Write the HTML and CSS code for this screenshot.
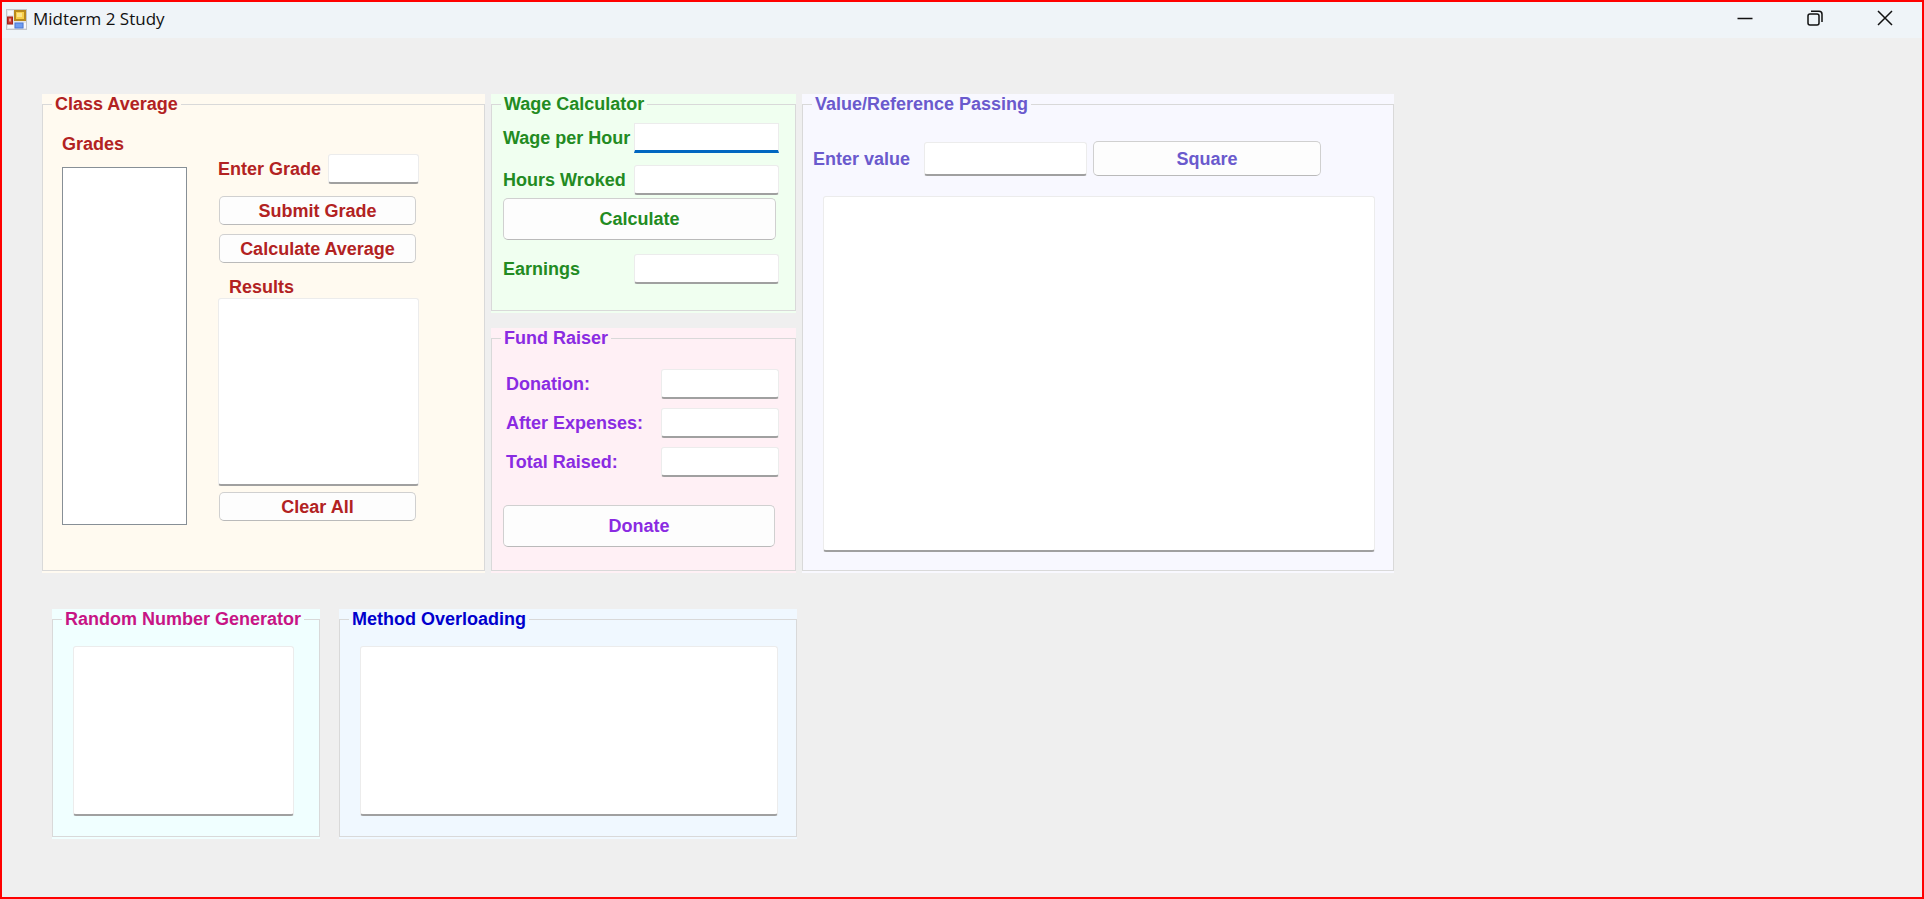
FILE: index.html
```html
<!DOCTYPE html>
<html lang="en">
<head>
<meta charset="utf-8">
<title>Midterm 2 Study</title>
<link rel="stylesheet" href="styles.css">
</head>
<body>
<div class="window">
  <header class="titlebar">
    <svg class="app-icon" viewBox="0 0 21 21" aria-hidden="true">
      <rect x="0.5" y="0.5" width="20" height="20" fill="#e4e6ea" stroke="#c3c5c9"/>
      <rect x="2" y="2" width="5" height="4" fill="#f7f8fa"/>
      <rect x="2" y="16" width="6" height="3" fill="#f7f8fa"/>
      <rect x="9" y="2" width="10" height="9" fill="#f8cf4a" stroke="#b98a1c" stroke-width="2"/>
      <rect x="11" y="4" width="5" height="4" fill="#fde48a"/>
      <rect x="1.500" y="8" width="5" height="7" fill="#c8362c" stroke="#a3241d"/>
      <rect x="3" y="9.500" width="2" height="3" fill="#ee9a92"/>
      <rect x="9" y="14" width="8" height="5" fill="#6f9cf0" stroke="#4a78d6"/>
      <rect x="18" y="14" width="2" height="5" fill="#f7f8fa"/>
    </svg>
    <h1 class="title">Midterm 2 Study</h1>
    <div class="window-controls">
      <button type="button" class="control" aria-label="Minimize">
        <svg viewBox="0 0 16 16"><path d="M0.500 8.500H15.500"/></svg>
      </button>
      <button type="button" class="control" aria-label="Restore">
        <svg viewBox="0 0 16 16"><rect x="1" y="4" width="11" height="11" rx="2"/><path d="M4 1.200H12A3 3 0 0 1 15 4.200V12"/></svg>
      </button>
      <button type="button" class="control" aria-label="Close">
        <svg viewBox="0 0 16 16"><path d="M1 1L15 15M15 1L1 15"/></svg>
      </button>
    </div>
  </header>

  <main class="content">
    <div class="top-row">
      <section class="panel panel-class">
        <fieldset class="group">
          <legend>Class Average</legend>
          <div class="class-body">
            <div class="grades">
              <label for="grades">Grades</label>
              <select id="grades" class="listbox" size="10"></select>
            </div>
            <div class="grade-tools">
              <div class="grade-entry">
                <label for="grade">Enter Grade</label>
                <input id="grade" class="field" type="text">
              </div>
              <button type="button" class="btn">Submit Grade</button>
              <button type="button" class="btn">Calculate Average</button>
              <label class="results-label" for="results">Results</label>
              <textarea id="results" class="field results"></textarea>
              <button type="button" class="btn btn-clear">Clear All</button>
            </div>
          </div>
        </fieldset>
      </section>

      <div class="stack">
        <section class="panel panel-wage">
          <fieldset class="group">
            <legend>Wage Calculator</legend>
            <div class="wage-body">
              <div class="wage-row">
                <label for="wage">Wage per Hour</label>
                <input id="wage" class="field field-active" type="text">
              </div>
              <div class="wage-row wage-row-hours">
                <label for="hours">Hours Wroked</label>
                <input id="hours" class="field" type="text">
              </div>
              <button type="button" class="btn btn-tall">Calculate</button>
              <div class="wage-row wage-row-earnings">
                <label for="earnings">Earnings</label>
                <input id="earnings" class="field" type="text">
              </div>
            </div>
          </fieldset>
        </section>

        <section class="panel panel-fund">
          <fieldset class="group">
            <legend>Fund Raiser</legend>
            <div class="fund-body">
              <div class="fund-row">
                <label for="donation">Donation:</label>
                <input id="donation" class="field" type="text">
              </div>
              <div class="fund-row">
                <label for="after">After Expenses:</label>
                <input id="after" class="field" type="text">
              </div>
              <div class="fund-row">
                <label for="total">Total Raised:</label>
                <input id="total" class="field" type="text">
              </div>
              <button type="button" class="btn btn-tall btn-donate">Donate</button>
            </div>
          </fieldset>
        </section>
      </div>

      <section class="panel panel-value">
        <fieldset class="group">
          <legend>Value/Reference Passing</legend>
          <div class="value-body">
            <div class="value-row">
              <label for="value">Enter value</label>
              <input id="value" class="field" type="text">
              <button type="button" class="btn">Square</button>
            </div>
            <textarea class="field output-large" aria-label="Squared values"></textarea>
          </div>
        </fieldset>
      </section>
    </div>

    <div class="bottom-row">
      <section class="panel panel-random">
        <fieldset class="group">
          <legend>Random Number Generator</legend>
          <div class="output-body"><textarea class="field output" aria-label="Random numbers"></textarea></div>
        </fieldset>
      </section>
      <section class="panel panel-method">
        <fieldset class="group">
          <legend>Method Overloading</legend>
          <div class="output-body output-body-wide"><textarea class="field output" aria-label="Method results"></textarea></div>
        </fieldset>
      </section>
    </div>
  </main>
</div>
</body>
</html>
```

FILE: styles.css
```css
* {
  box-sizing: border-box;
}

body {
  margin: 0;
  font-family: "Liberation Sans", Arial, sans-serif;
  font-size: 18px;
  font-weight: 700;
  line-height: 20px;
}

.window {
  min-height: 100vh;
  border: 2px solid #ff0000;
  background: #efefef;
}

/* Title bar */
.titlebar {
  display: flex;
  align-items: center;
  height: 36px;
  padding: 0 2px 2px 4px;
  background: #eff4f8;
}

.app-icon {
  width: 21px;
  height: 21px;
}

.title {
  margin: 0 auto 0 6px;
  color: #111111;
  font-family: "Open Sans", "Noto Sans", sans-serif;
  font-size: 17px;
  font-weight: 400;
  line-height: 24px;
}

.window-controls {
  display: flex;
  height: 100%;
}

.control {
  display: flex;
  justify-content: center;
  width: 70px;
  padding: 8px 0 0;
  border: 0;
  background: none;
}

.control svg {
  width: 16px;
  height: 16px;
  fill: none;
  stroke: #111111;
  stroke-width: 1.5;
}

/* Page layout */
.content {
  padding-top: 56px;
}

.top-row {
  display: grid;
  grid-template-columns: 443fr 305fr 592fr 522fr;
  gap: 6px;
  padding-left: 40px;
}

.bottom-row {
  display: grid;
  grid-template-columns: 268fr 458fr 1106fr;
  gap: 19px;
  padding: 36px 0 56px 50px;
}

.stack {
  display: flex;
  flex-direction: column;
  justify-content: space-between;
}

/* Group boxes */
.panel {
  padding-bottom: 2px;
}

.group {
  height: 100%;
  min-width: 0;
  margin: 0;
  padding: 0;
  border: 1px solid #d9d9d9;
}

.group legend {
  margin-left: 9px;
  padding: 0 3px;
  line-height: 20px;
}

.panel-class { background: #fffaf0; color: #b22222; }
.panel-wage { background: #f0fff0; color: #228b22; }
.panel-fund { background: #fff0f5; color: #8a2be2; }
.panel-value { background: #f8f8ff; color: #6a5acd; }
.panel-random { background: #f0ffff; color: #c71585; }
.panel-method { background: #f0f8ff; color: #0000cd; }

/* Controls */
label {
  white-space: nowrap;
}

.field {
  display: block;
  width: 100%;
  min-width: 0;
  height: 30px;
  padding: 2px 6px;
  border: 1px solid #ececec;
  border-bottom: 2px solid #a0a0a0;
  border-radius: 3px;
  background: #ffffff;
  color: inherit;
  font: inherit;
  resize: none;
}

.field-active {
  border-bottom: 3px solid #0067c0;
  border-radius: 0;
}

.listbox {
  display: block;
  width: 100%;
  height: 358px;
  border: 1px solid #878f96;
  border-radius: 0;
  background: #ffffff;
  color: inherit;
  font: inherit;
}

.btn {
  height: 29px;
  padding: 0 6px;
  border: 1px solid #d0d0d0;
  border-bottom-color: #bababa;
  border-radius: 5px;
  background: #fdfdfd;
  color: inherit;
  font: inherit;
}

.btn-tall {
  height: 42px;
}

/* Class average */
.class-body {
  display: grid;
  grid-template-columns: 125fr 201fr;
  gap: 31px;
  padding: 20px 65px 45px 19px;
}

.grades {
  display: flex;
  flex-direction: column;
  gap: 13px;
}

.grade-tools {
  display: flex;
  flex-direction: column;
  padding-top: 20px;
}

.grade-entry {
  display: grid;
  grid-template-columns: 110fr 91fr;
  align-items: center;
  margin-bottom: 12px;
}

.grade-tools .btn {
  margin: 0 3px 9px 1px;
}

.results-label {
  margin: 5px 0 0 11px;
}

.results {
  height: 188px;
  margin-top: 1px;
}

.grade-tools .btn-clear {
  margin: 6px 3px 0 1px;
}

/* Wage calculator */
.wage-body {
  display: flex;
  flex-direction: column;
  padding: 9px 16px 26px 11px;
}

.wage-row {
  display: grid;
  grid-template-columns: 131fr 145fr;
  align-items: center;
}

.wage-row-hours {
  margin: 12px 0 3px;
}

.wage-row-earnings {
  margin-top: 14px;
}

.wage-body .btn {
  margin-right: 3px;
}

/* Fund raiser */
.fund-body {
  display: flex;
  flex-direction: column;
  gap: 9px;
  padding: 21px 16px 23px 11px;
}

.fund-row {
  display: grid;
  grid-template-columns: 155fr 118fr;
  align-items: center;
  padding-left: 3px;
}

.btn-donate {
  margin: 19px 4px 0 0;
}

/* Value and reference passing */
.value-body {
  padding: 27px 18px 17px 10px;
}

.value-row {
  display: grid;
  grid-template-columns: 111fr 163fr 6fr 228fr 54fr;
  align-items: center;
  margin-bottom: 20px;
}

.value-row .field {
  height: 34px;
}

.value-row .btn {
  grid-column: 4;
  height: 35px;
}

.output-large {
  width: auto;
  min-width: calc(100% - 10px);
  height: 356px;
  margin-left: 10px;
}

/* Text output boxes */
.output-body {
  padding: 17px 25px 20px 20px;
}

.output-body-wide {
  padding-right: 18px;
}

.output {
  height: 170px;
}
```
